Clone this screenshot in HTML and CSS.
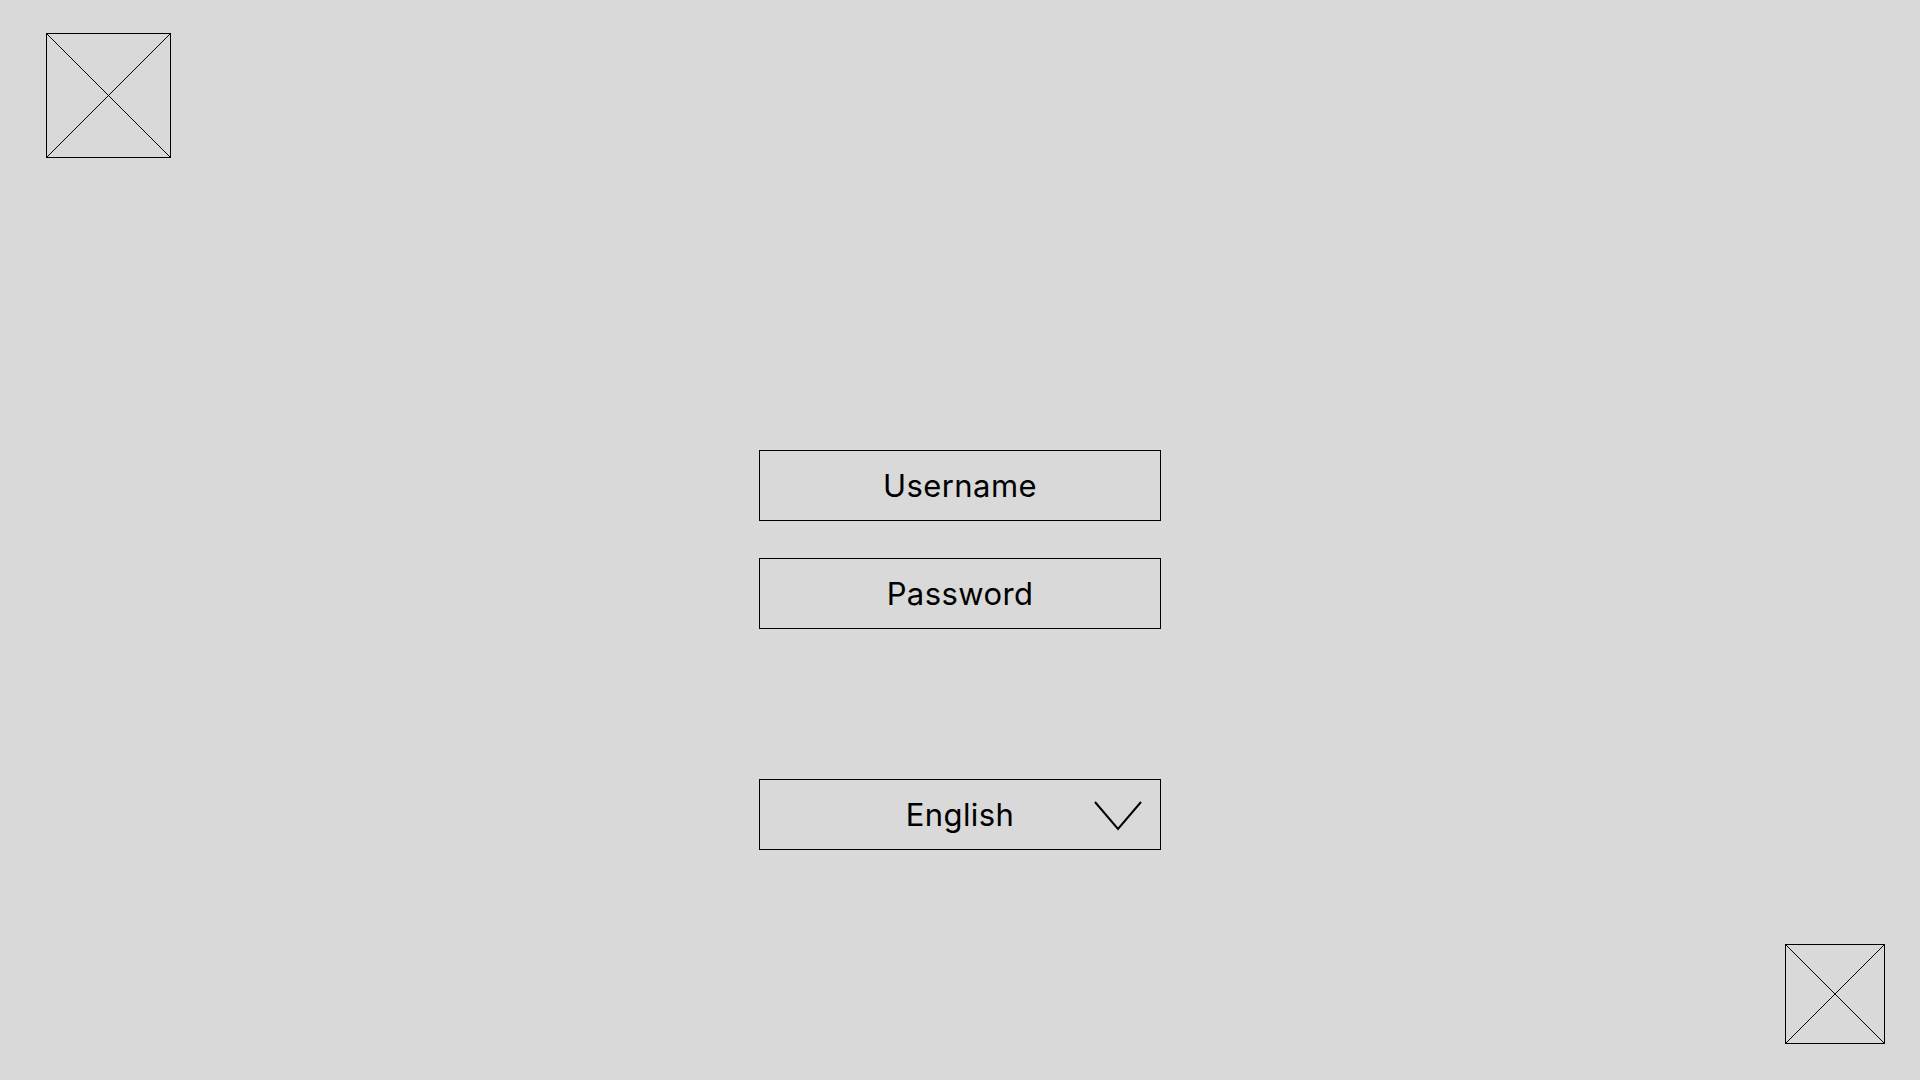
FILE: index.html
```html
<!DOCTYPE html>
<html lang="en">
<head>
<meta charset="utf-8">
<title>Login</title>
<link rel="stylesheet" href="styles.css">
</head>
<body>
<div class="page">
  <header class="top">
    <svg class="ph ph-large" viewBox="0 0 125 125" aria-hidden="true">
      <rect x="0.5" y="0.5" width="124" height="124" fill="none" stroke="#000" stroke-width="1"/>
      <line x1="0.5" y1="0.5" x2="124.5" y2="124.5" stroke="#000" stroke-width="1"/>
      <line x1="124.5" y1="0.5" x2="0.5" y2="124.5" stroke="#000" stroke-width="1"/>
    </svg>
  </header>
  <main class="form">
    <div class="field">Username</div>
    <div class="field field-pass">Password</div>
    <div class="field field-select">English
      <svg class="chev" viewBox="0 0 48 30" aria-hidden="true">
        <polyline points="1,1 24,28 47,1" fill="none" stroke="#000" stroke-width="2"/>
      </svg>
    </div>
  </main>
  <footer class="bottom">
    <svg class="ph ph-small" viewBox="0 0 100 100" aria-hidden="true">
      <rect x="0.5" y="0.5" width="99" height="99" fill="none" stroke="#000" stroke-width="1"/>
      <line x1="0.5" y1="0.5" x2="99.5" y2="99.5" stroke="#000" stroke-width="1"/>
      <line x1="99.5" y1="0.5" x2="0.5" y2="99.5" stroke="#000" stroke-width="1"/>
    </svg>
  </footer>
</div>
</body>
</html>
```
FILE: styles.css
```css
html, body {
  margin: 0;
  padding: 0;
  background: #d9d9d9;
}
body {
  font-family: Inter, "Liberation Sans", sans-serif;
  color: #000;
}
.page {
  width: 1920px;
  height: 1080px;
  display: flex;
  flex-direction: column;
  box-sizing: border-box;
}
.top {
  padding: 33px 0 0 46px;
  height: 125px;
}
.ph {
  display: block;
}
.ph-large {
  width: 125px;
  height: 125px;
}
.ph-small {
  width: 100px;
  height: 100px;
}
.form {
  margin-top: 292px;
  display: flex;
  flex-direction: column;
  align-items: center;
}
.field {
  position: relative;
  box-sizing: border-box;
  width: 402px;
  height: 71px;
  border: 1px solid #000;
  display: flex;
  align-items: center;
  justify-content: center;
  font-size: 31px;
  letter-spacing: 0.4px;
}
.field-pass {
  margin-top: 37px;
}
.field-select {
  margin-top: 150px;
}
.chev {
  position: absolute;
  right: 18px;
  top: 21px;
  width: 48px;
  height: 30px;
}
.bottom {
  margin-top: 94px;
  padding-right: 35px;
  display: flex;
  justify-content: flex-end;
}
```
